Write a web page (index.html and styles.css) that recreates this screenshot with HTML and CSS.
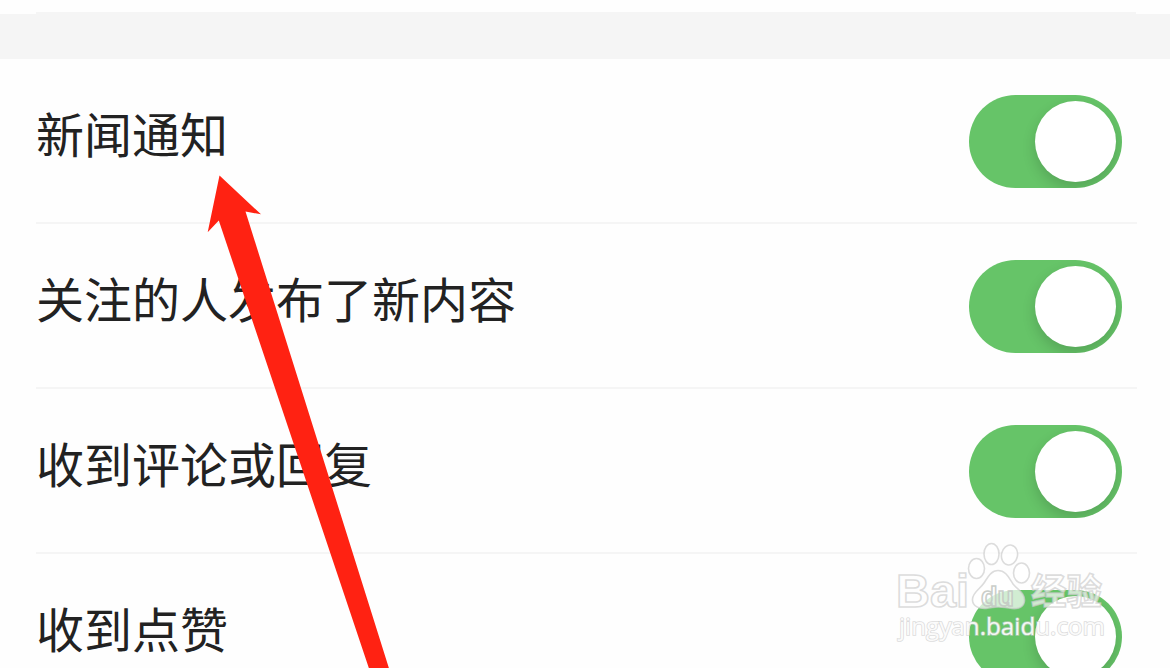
FILE: index.html
```html
<!DOCTYPE html>
<html lang="zh-CN">
<head>
  <meta charset="UTF-8" />
  <meta name="viewport" content="width=device-width, initial-scale=1.0"/>
  <title>通知设置</title>
  <link rel="stylesheet" href="styles.css">
</head>
<body>
  <div class="section-gap"></div>

  <ul class="settings">
    <li class="row">
      <span class="label">新闻通知</span>
      <span class="switch"><span class="knob"></span></span>
    </li>
    <li class="row">
      <span class="label">关注的人发布了新内容</span>
      <span class="switch"><span class="knob"></span></span>
    </li>
    <li class="row">
      <span class="label">收到评论或回复</span>
      <span class="switch"><span class="knob"></span></span>
    </li>
    <li class="row">
      <span class="label">收到点赞</span>
      <span class="switch"><span class="knob"></span></span>
    </li>
  </ul>

  <svg class="arrow" width="190" height="498" viewBox="200 170 190 498">
    <path d="M219.5 175.5 L261 214.3 L245.5 211.5 L389.5 670 L369.5 670 L218.8 220.5 L207.7 232.3 Z" fill="#ff2212"/>
  </svg>

  <svg class="watermark" width="230" height="120" viewBox="890 535 230 120">
    <g class="mark">
      <text class="brand" x="896" y="607" textLength="73" lengthAdjust="spacingAndGlyphs">Bai</text>
      <ellipse cx="976.5" cy="568.5" rx="8" ry="10"/>
      <ellipse cx="991.5" cy="554" rx="7.5" ry="10.5"/>
      <ellipse cx="1009.5" cy="555" rx="8" ry="10" transform="rotate(12 1009.5 555)"/>
      <ellipse cx="1021.5" cy="573" rx="8" ry="10"/>
      <path d="M998 570.500 C1006 570.500 1009 578 1013 584 C1018 590 1025 593 1024.500 601 C1024 608 1017 609 1012 608.500 C1003 606.500 994 606.500 986 608.500 C979 609 972 606 972.500 599 C973 592 980 589 984 583 C988 577 991 570.500 998 570.500 Z"/>
      <text class="du" x="981" y="606" textLength="33" lengthAdjust="spacingAndGlyphs">du</text>
      <text class="cn" x="1031" y="605" textLength="71" lengthAdjust="spacingAndGlyphs">经验</text>
      <text class="url" x="899" y="635" textLength="206" lengthAdjust="spacingAndGlyphs">jingyan.baidu.com</text>
    </g>
  </svg>
</body>
</html>
```
FILE: styles.css
```css
* {
  box-sizing: border-box;
}

html, body {
  margin: 0;
  padding: 0;
  height: 668px;
  overflow: hidden;
  background: #fefefe;
  font-family: "Noto Sans CJK SC", sans-serif;
}

body {
  position: relative;
  padding-top: 12px;
}

/* grey band, with the previous row's divider resting on it */
.section-gap {
  height: 47px;
  background: linear-gradient(#f5f5f5, #f5f5f5) 0 2px no-repeat,
    linear-gradient(#f5f5f5, #f5f5f5) 36px 0 / 1100px 2px no-repeat;
}

.settings {
  list-style: none;
  height: 609px;
  margin: 0;
  padding: 0 33px 0 36px;
  overflow: hidden;
}

.row {
  display: flex;
  align-items: flex-start;
  justify-content: space-between;
  height: 165px;
  padding: 36px 15px 0 0;
  border-bottom: 2px solid #f5f5f5;
}

.row:last-child {
  height: 114px;
  border-bottom: none;
}

.label {
  font-size: 48px;
  font-weight: 400;
  line-height: 70px;
  margin-top: 2px;
  color: #222;
  white-space: nowrap;
}

.switch {
  display: flex;
  flex-shrink: 0;
  justify-content: flex-end;
  align-items: center;
  width: 153px;
  height: 93px;
  padding-right: 6px;
  border-radius: 47px;
  background: #66c468;
  overflow: hidden;
}

.knob {
  width: 81px;
  height: 81px;
  border-radius: 50%;
  background: #fff;
  box-shadow: 0 6px 14px rgba(0, 0, 0, 0.16);
}

.arrow {
  position: absolute;
  left: 200px;
  top: 170px;
}

.watermark {
  position: absolute;
  left: 890px;
  top: 535px;
}

.mark {
  fill: rgba(255, 255, 255, 0.7);
  stroke: rgba(205, 205, 205, 0.7);
  stroke-width: 1.6;
}

.brand {
  font: 700 47px "Liberation Sans", sans-serif;
}

.du {
  font: 700 27px "Liberation Sans", sans-serif;
  fill: rgba(255, 255, 255, 0.3);
  stroke: rgba(195, 200, 195, 0.9);
}

.cn {
  font: 700 36px "Noto Sans CJK SC", sans-serif;
}

.url {
  font: 400 24px "Open Sans", sans-serif;
  fill: rgba(255, 255, 255, 0.9);
  stroke: rgba(205, 205, 205, 0.7);
  stroke-width: 1.6;
  paint-order: stroke;
}
```
